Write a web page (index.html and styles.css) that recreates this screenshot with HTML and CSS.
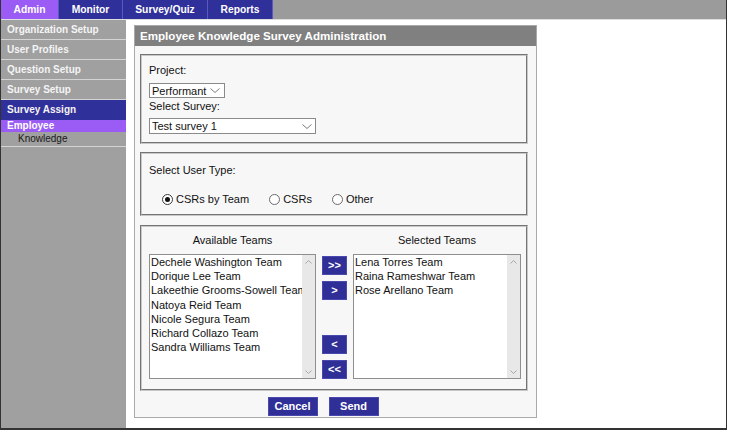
FILE: index.html
```html
<!DOCTYPE html>
<html lang="en">
<head>
<meta charset="utf-8">
<title>Employee Knowledge Survey Administration</title>
<link rel="stylesheet" href="styles.css">
</head>
<body>
<div class="frame">
  <div class="topnav">
    <div class="tab tab-admin">Admin</div>
    <div class="tab tab-monitor">Monitor</div>
    <div class="tab tab-survey">Survey/Quiz</div>
    <div class="tab tab-reports">Reports</div>
  </div>
  <div class="below">
    <nav class="sidebar">
      <div class="side-item">Organization Setup</div>
      <div class="side-item">User Profiles</div>
      <div class="side-item">Question Setup</div>
      <div class="side-item">Survey Setup</div>
      <div class="side-item side-current">Survey Assign</div>
      <div class="side-sub">Employee</div>
      <div class="side-leaf">Knowledge</div>
    </nav>
    <main class="main">
      <section class="panel">
        <div class="panel-head">Employee Knowledge Survey Administration</div>
        <div class="panel-body">
          <div class="group group-survey">
            <div class="label">Project:</div>
            <div class="select select-project">
              <span>Performant</span>
              <svg class="chev" width="10" height="5" viewBox="0 0 10 5"><polyline points="0.5,0.5 5,4.5 9.5,0.5" fill="none" stroke="#7a7a7a" stroke-width="1"/></svg>
            </div>
            <div class="label label-survey">Select Survey:</div>
            <div class="select select-survey">
              <span>Test survey 1</span>
              <svg class="chev" width="10" height="5" viewBox="0 0 10 5"><polyline points="0.5,0.5 5,4.5 9.5,0.5" fill="none" stroke="#7a7a7a" stroke-width="1"/></svg>
            </div>
          </div>
          <div class="group group-type">
            <div class="label">Select User Type:</div>
            <div class="radios">
              <div class="radio"><span class="circle circle-on"></span>CSRs by Team</div>
              <div class="radio"><span class="circle"></span>CSRs</div>
              <div class="radio"><span class="circle"></span>Other</div>
            </div>
          </div>
          <div class="group group-teams">
            <div class="col-title">Available Teams</div>
            <div class="spacer"></div>
            <div class="col-title">Selected Teams</div>
            <div class="listbox">
              <ul class="options">
                <li>Dechele Washington Team</li>
                <li>Dorique Lee Team</li>
                <li>Lakeethie Grooms-Sowell Team</li>
                <li>Natoya Reid Team</li>
                <li>Nicole Segura Team</li>
                <li>Richard Collazo Team</li>
                <li>Sandra Williams Team</li>
              </ul>
              <div class="scrollbar">
                <svg width="7" height="4" viewBox="0 0 7 4"><polyline points="0.5,3.5 3.5,0.5 6.5,3.5" fill="none" stroke="#a8a8a8" stroke-width="1"/></svg>
                <svg width="7" height="4" viewBox="0 0 7 4"><polyline points="0.5,0.5 3.5,3.5 6.5,0.5" fill="none" stroke="#a8a8a8" stroke-width="1"/></svg>
              </div>
            </div>
            <div class="movers">
              <button class="btn btn-move">&gt;&gt;</button>
              <button class="btn btn-move">&gt;</button>
              <button class="btn btn-move btn-back">&lt;</button>
              <button class="btn btn-move">&lt;&lt;</button>
            </div>
            <div class="listbox listbox-right">
              <ul class="options">
                <li>Lena Torres Team</li>
                <li>Raina Rameshwar Team</li>
                <li>Rose Arellano Team</li>
              </ul>
              <div class="scrollbar">
                <svg width="7" height="4" viewBox="0 0 7 4"><polyline points="0.5,3.5 3.5,0.5 6.5,3.5" fill="none" stroke="#a8a8a8" stroke-width="1"/></svg>
                <svg width="7" height="4" viewBox="0 0 7 4"><polyline points="0.5,0.5 3.5,3.5 6.5,0.5" fill="none" stroke="#a8a8a8" stroke-width="1"/></svg>
              </div>
            </div>
          </div>
          <div class="actions">
            <button class="btn btn-action">Cancel</button>
            <button class="btn btn-action">Send</button>
          </div>
        </div>
      </section>
    </main>
  </div>
</div>
</body>
</html>
```
FILE: styles.css
```css
* { box-sizing: border-box; }
html, body { margin: 0; padding: 0; background: #ffffff; }
body { font-family: "Liberation Sans", Arial, sans-serif; color: #111; }

.frame {
  width: 727px;
  height: 430px;
  border-left: 1px solid #333;
  border-right: 1px solid #333;
  border-bottom: 2px solid #333;
  display: flex;
  flex-direction: column;
  overflow: hidden;
}

/* top navigation */
.topnav {
  flex: none;
  display: flex;
  height: 20px;
  background: #9b9b9b;
  border-bottom: 1px solid #dedede;
}
.tab {
  height: 19px;
  line-height: 19px;
  text-align: center;
  color: #fff;
  font-weight: bold;
  font-size: 10.3px;
  background: #30309a;
  border-right: 1px solid #5858c0;
}
.tab-admin { width: 58px; background: #9b5cf6; }
.tab-monitor { width: 64px; }
.tab-survey { width: 85px; }
.tab-reports { width: 65px; }

.below { flex: 1; display: flex; min-height: 0; }

/* sidebar */
.sidebar { flex: none; width: 125px; background: #a0a0a0; }
.side-item {
  height: 20px;
  line-height: 19px;
  border-bottom: 1px solid #d4d4d4;
  padding-left: 6px;
  font-size: 10px;
  font-weight: bold;
  color: #f4f4f4;
}
.side-current { background: #30309a; border-bottom: none; line-height: 20px; }
.side-sub {
  height: 12px;
  line-height: 12px;
  padding-left: 6px;
  font-size: 10px;
  font-weight: bold;
  color: #fff;
  background: #9b5cf6;
}
.side-leaf {
  height: 15px;
  line-height: 14px;
  padding-left: 17px;
  font-size: 10px;
  color: #1a1a1a;
  border-bottom: 1px solid #d4d4d4;
}

/* main */
.main { flex: 1; background: #fff; padding: 5px 0 0 8px; }
.panel {
  width: 403px;
  border: 1px solid #a9a9a9;
  background: #f7f7f7;
}
.panel-head {
  height: 20px;
  line-height: 20px;
  background: #808080;
  color: #fff;
  font-weight: bold;
  font-size: 11.6px;
  padding-left: 5px;
}
.panel-body { padding: 8px 8px 1px 5px; }

.group {
  border: 2px groove #c8c8c8;
  padding-left: 7px;
  font-size: 11px;
}
.label { height: 14px; line-height: 14px; font-size: 11px; color: #111; }

.group-survey { height: 90px; padding-top: 7px; }
.select {
  display: flex;
  align-items: center;
  justify-content: space-between;
  background: #fff;
  border: 1px solid #8a8a8a;
  padding: 0 4px 0 2px;
  font-size: 11px;
  color: #111;
}
.select-project { width: 76px; height: 15px; margin-top: 6px; }
.label-survey { margin-top: 1px; }
.select-survey { width: 167px; height: 16px; margin-top: 5px; padding-right: 3px; }
.chev { flex: none; }

.group-type { height: 64px; margin-top: 8px; padding-top: 9px; }
.radios { display: flex; margin-top: 15px; margin-left: 13px; height: 14px; align-items: center; }
.radio { display: flex; align-items: center; margin-right: 20px; line-height: 14px; }
.circle {
  width: 11px;
  height: 11px;
  border: 1px solid #6a6a6a;
  border-radius: 50%;
  background: #fff;
  margin-right: 3px;
  display: flex;
  align-items: center;
  justify-content: center;
}
.circle-on { border-color: #3a3a3a; }
.circle-on::after {
  content: "";
  width: 5px;
  height: 5px;
  border-radius: 50%;
  background: #111;
}

.group-teams {
  height: 166px;
  margin-top: 9px;
  padding-top: 6px;
  display: grid;
  grid-template-columns: 167px 25px 168px;
  grid-template-rows: 14px 125px;
  column-gap: 6px;
  row-gap: 7px;
}
.col-title { text-align: center; line-height: 14px; font-size: 11px; color: #111; }
.listbox {
  display: flex;
  border: 1px solid #8e8e8e;
  background: #fff;
  overflow: hidden;
}
.options {
  flex: 1;
  min-width: 0;
  margin: 0;
  padding: 0 0 0 1px;
  list-style: none;
  overflow: hidden;
}
.options li {
  height: 14.2px;
  line-height: 14.2px;
  font-size: 11px;
  white-space: nowrap;
  overflow: hidden;
  color: #111;
}
.scrollbar {
  flex: none;
  width: 13px;
  background: #e8e8e8;
  display: flex;
  flex-direction: column;
  justify-content: space-between;
  align-items: center;
  padding: 5px 0 4px;
}
.movers { display: flex; flex-direction: column; padding-top: 2px; }
.btn {
  font-family: "Liberation Sans", Arial, sans-serif;
  font-weight: bold;
  font-size: 11px;
  color: #fff;
  background: #2f2f97;
  border: 1px solid #4848ad;
  padding: 0;
  height: 19px;
  line-height: 17px;
  text-align: center;
}
.btn-move { width: 25px; margin-bottom: 6px; }
.btn-move:last-child { margin-bottom: 0; }
.btn-back { margin-top: auto; }

.actions {
  display: flex;
  justify-content: center;
  gap: 11px;
  padding-right: 22px;
  margin-top: 6px;
}
.btn-action { width: 50px; }
```
